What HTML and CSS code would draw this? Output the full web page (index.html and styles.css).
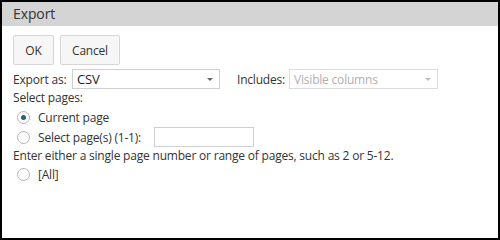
FILE: index.html
```html
<!DOCTYPE html>
<html>
<head>
<meta charset="utf-8">
<link rel="stylesheet" href="styles.css">
</head>
<body>
<div class="frame">
  <div class="dialog">
    <div class="title">Export</div>
    <div class="content">
      <div class="buttons">
        <button class="btn btn-ok">OK</button>
        <button class="btn btn-cancel">Cancel</button>
      </div>
      <div class="row-export">
        <span class="lbl lbl-exp">Export as:</span>
        <div class="select select-format"><span class="val">CSV</span><span class="arrow"></span></div>
        <span class="lbl lbl-inc">Includes:</span>
        <div class="select select-inc disabled"><span class="val">Visible columns</span><span class="arrow"></span></div>
      </div>
      <div class="sel-pages">Select pages:</div>
      <div class="radio-row"><span class="radio checked"></span><span>Current page</span></div>
      <div class="radio-row"><span class="radio"></span><span class="sp-lbl">Select page(s) (1-1):</span><span class="textbox"></span></div>
      <div class="hint">Enter either a single page number or range of pages, such as 2 or 5-12.</div>
      <div class="radio-row last"><span class="radio"></span><span>[All]</span></div>
    </div>
  </div>
</div>
</body>
</html>
```
FILE: styles.css
```css
html, body { margin: 0; padding: 0; background: #000; }
body { width: 500px; height: 240px; font-family: "Open Sans", sans-serif; font-size: 12px; letter-spacing: -0.2px; color: #333; }
.frame { padding: 2px; height: 236px; }
.dialog { background: #fff; height: 236px; width: 496px; }
.title { background: #d4d4d5; height: 24px; line-height: 24px; padding-left: 11px; font-size: 14px; color: #333; letter-spacing: -0.1px; }
.content { padding: 9px 0 0 11px; }
.buttons { display: flex; gap: 6px; }
.btn { font-family: inherit; font-size: 12px; letter-spacing: -0.2px; color: #333; background: #f6f6f6; border: 1px solid #d6d6d6; border-radius: 2px; height: 30px; padding: 0; }
.btn-ok { width: 41px; }
.btn-cancel { width: 60px; }
.row-export { display: flex; align-items: center; margin-top: 4px; height: 20px; }
.lbl-exp { width: 59px; }
.select { position: relative; border: 1px solid #cfcfcf; display: flex; align-items: center; padding-left: 4px; box-sizing: border-box; height: 20px; }
.select-format { width: 148px; font-size: 13px; color: #222; }
.select-inc { width: 149px; }
.lbl-inc { width: 52px; margin-left: 17px; }
.disabled { color: #b0b0b0; border-color: #dcdcdc; }
.arrow { position: absolute; right: 6px; top: 8px; width: 0; height: 0; border-left: 3px solid transparent; border-right: 3px solid transparent; border-top: 3px solid #666; }
.disabled .arrow { border-top-color: #bbb; }
.sel-pages { margin-top: 0; height: 18px; line-height: 18px; }
.radio-row { display: flex; align-items: center; height: 20px; padding-left: 4px; }
.radio-row.last { height: 18px; }
.radio { width: 11px; height: 11px; border: 1px solid #b5b5b5; border-radius: 50%; margin-right: 8px; box-sizing: content-box; position: relative; background: #fff; }
.radio.checked::after { content: ""; position: absolute; left: 3px; top: 3px; width: 5px; height: 5px; border-radius: 50%; background: #2b5f7e; }
.sp-lbl { width: 116px; }
.textbox { width: 98px; height: 18px; border: 1px solid #cfcfcf; }
.hint { height: 18px; line-height: 18px; }
```
